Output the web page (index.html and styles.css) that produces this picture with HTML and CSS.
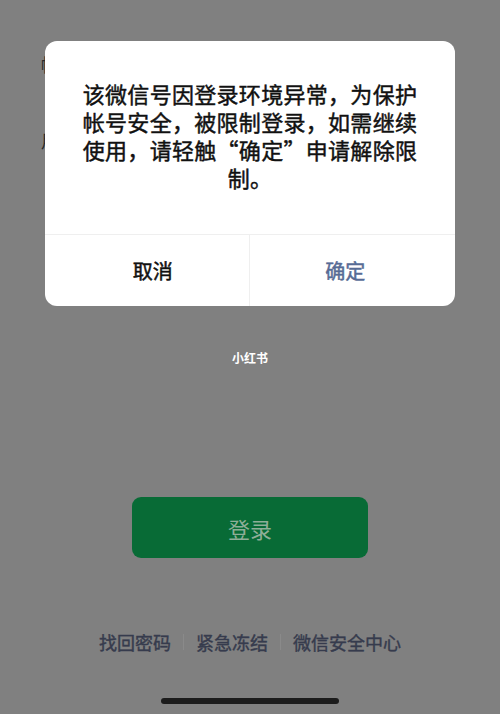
FILE: index.html
```html
<!DOCTYPE html>
<html lang="zh-CN">
<head>
    <meta charset="UTF-8">
    <meta name="viewport" content="width=device-width, initial-scale=1.0">
    <title>微信登录</title>
    <link rel="stylesheet" href="styles.css">
</head>
<body>
    <div class="page">
        <div class="form">
            <div class="form-row first">帐号</div>
            <div class="form-row">用户</div>
        </div>

        <div class="watermark">小红书</div>

        <button class="login-button">登录</button>

        <div class="links">
            <span>找回密码</span>
            <span class="sep"></span>
            <span>紧急冻结</span>
            <span class="sep"></span>
            <span>微信安全中心</span>
        </div>

        <div class="home-bar"></div>

        <!-- 弹窗 -->
        <div class="dialog">
            <div class="dialog-body">
                <div class="line">该微信号因登录环境异常，为保护</div>
                <div class="line">帐号安全，被限制登录，如需继续</div>
                <div class="line">使用，请轻触“确定”申请解除限</div>
                <div class="line">制。</div>
            </div>
            <div class="dialog-actions">
                <div class="action cancel">取消</div>
                <div class="action confirm">确定</div>
            </div>
        </div>
    </div>
</body>
</html>
```

FILE: styles.css
```css
body {
    margin: 0;
    background: #808080;
    font-family: "Noto Sans CJK SC", "Noto Sans", sans-serif;
}
.page {
    position: relative;
    width: 500px;
    height: 714px;
    overflow: hidden;
    display: flex;
    flex-direction: column;
    align-items: center;
}
.form {
    align-self: stretch;
    padding: 52px 0 0 41px;
    height: 290px;
    box-sizing: border-box;
}
.form-row {
    font-size: 18px;
    line-height: 24px;
    color: #2a2a2a;
    margin-bottom: 52px;
}
.watermark {
    margin-top: 60px;
    font-size: 12px;
    font-weight: bold;
    line-height: 16px;
    color: #ffffff;
}
.login-button {
    margin-top: 131px;
    width: 236px;
    height: 61px;
    border: none;
    border-radius: 9px;
    background: #086b36;
    color: #8fae98;
    font-family: inherit;
    font-size: 22px;
}
.links {
    margin-top: 71px;
    display: flex;
    align-items: center;
    font-size: 18px;
    line-height: 26px;
    color: #363b4d;
    -webkit-text-stroke: 0.4px #363b4d;
}
.sep {
    width: 1px;
    height: 16px;
    background: #8a8a8a;
    margin: 0 12px;
}
.home-bar {
    margin-top: 43px;
    width: 178px;
    height: 6px;
    border-radius: 3px;
    background: #1c1c1c;
}
.dialog {
    position: absolute;
    top: 41px;
    left: 45px;
    width: 410px;
    height: 265px;
    background: #ffffff;
    border-radius: 12px;
    display: flex;
    flex-direction: column;
    overflow: hidden;
}
.dialog-body {
    flex: 1;
    padding: 38px 20px 0;
    text-align: center;
    font-size: 22px;
    color: #111111;
    -webkit-text-stroke: 0.45px #111111;
}
.line {
    height: 28px;
    line-height: 28px;
    white-space: nowrap;
    letter-spacing: 0.3px;
}
.dialog-actions {
    display: flex;
    height: 71px;
    border-top: 1px solid #efefef;
}
.action {
    flex: 1;
    display: flex;
    align-items: center;
    justify-content: center;
    font-size: 20px;
}
.cancel {
    color: #111111;
    -webkit-text-stroke: 0.5px #111111;
    padding-left: 12px;
    border-right: 1px solid #efefef;
}
.confirm {
    color: #576b95;
    -webkit-text-stroke: 0.5px #576b95;
    padding-right: 14px;
}
```
